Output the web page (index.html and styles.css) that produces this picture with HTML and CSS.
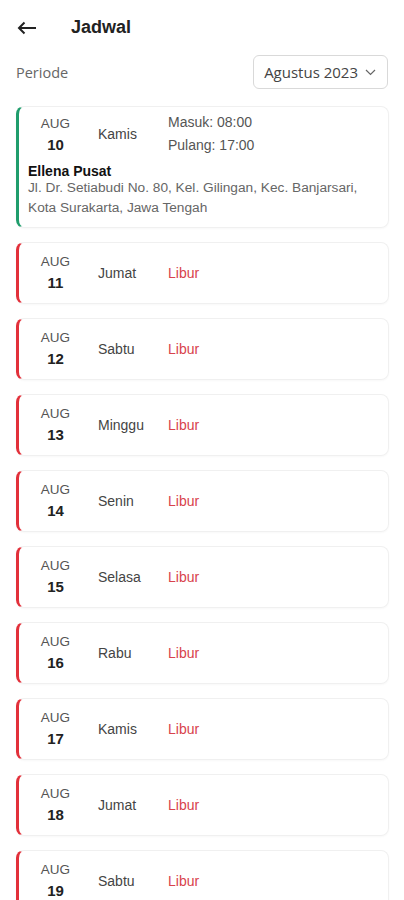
FILE: index.html
```html
<!DOCTYPE html>
<html>
<head>
	<meta http-equiv="content-type" content="text/html; charset=utf-8" />
	<title>Jadwal</title>
	<link rel="stylesheet" href="styles.css">
</head>
<body>
	<div class="header">
		<svg class="back" width="20" height="14" viewBox="0 0 20 14">
			<path d="M19 7H2M7.5 1.5L2 7l5.5 5.5" fill="none" stroke="#222" stroke-width="2" />
		</svg>
		<h1>Jadwal</h1>
	</div>

	<div class="periode">
		<span class="label">Periode</span>
		<div class="select">
			Agustus 2023
			<svg width="11" height="7" viewBox="0 0 11 7">
				<path d="M1 1l4.5 4.5L10 1" fill="none" stroke="#666" stroke-width="1.2" />
			</svg>
		</div>
	</div>

	<div class="list">
		<div class="card work">
			<div class="row">
				<div class="date"><span class="month">AUG</span><span class="day">10</span></div>
				<div class="weekday">Kamis</div>
				<div class="times">
					<div>Masuk: 08:00</div>
					<div>Pulang: 17:00</div>
				</div>
			</div>
			<div class="place">Ellena Pusat</div>
			<div class="address">Jl. Dr. Setiabudi No. 80, Kel. Gilingan, Kec. Banjarsari, Kota Surakarta, Jawa Tengah</div>
		</div>

		<div class="card off">
			<div class="row">
				<div class="date"><span class="month">AUG</span><span class="day">11</span></div>
				<div class="weekday">Jumat</div>
				<div class="status">Libur</div>
			</div>
		</div>
		<div class="card off">
			<div class="row">
				<div class="date"><span class="month">AUG</span><span class="day">12</span></div>
				<div class="weekday">Sabtu</div>
				<div class="status">Libur</div>
			</div>
		</div>
		<div class="card off">
			<div class="row">
				<div class="date"><span class="month">AUG</span><span class="day">13</span></div>
				<div class="weekday">Minggu</div>
				<div class="status">Libur</div>
			</div>
		</div>
		<div class="card off">
			<div class="row">
				<div class="date"><span class="month">AUG</span><span class="day">14</span></div>
				<div class="weekday">Senin</div>
				<div class="status">Libur</div>
			</div>
		</div>
		<div class="card off">
			<div class="row">
				<div class="date"><span class="month">AUG</span><span class="day">15</span></div>
				<div class="weekday">Selasa</div>
				<div class="status">Libur</div>
			</div>
		</div>
		<div class="card off">
			<div class="row">
				<div class="date"><span class="month">AUG</span><span class="day">16</span></div>
				<div class="weekday">Rabu</div>
				<div class="status">Libur</div>
			</div>
		</div>
		<div class="card off">
			<div class="row">
				<div class="date"><span class="month">AUG</span><span class="day">17</span></div>
				<div class="weekday">Kamis</div>
				<div class="status">Libur</div>
			</div>
		</div>
		<div class="card off">
			<div class="row">
				<div class="date"><span class="month">AUG</span><span class="day">18</span></div>
				<div class="weekday">Jumat</div>
				<div class="status">Libur</div>
			</div>
		</div>
		<div class="card off">
			<div class="row">
				<div class="date"><span class="month">AUG</span><span class="day">19</span></div>
				<div class="weekday">Sabtu</div>
				<div class="status">Libur</div>
			</div>
		</div>
	</div>
</body>
</html>
```

FILE: styles.css
```css
body {
	font-family: "Liberation Sans", Arial, sans-serif;
	background-color: #fff;
	color: #222;
	margin: 0;
	padding: 0;
}

/* Top bar */
.header {
	display: flex;
	align-items: center;
	height: 55px;
	padding: 0 0 0 17px;
	box-sizing: border-box;
}

.back {
	display: block;
}

.header h1 {
	margin: 0 0 0 34px;
	font-size: 18px;
	font-weight: bold;
	color: #222;
}

/* Period selector */
.periode {
	display: flex;
	align-items: center;
	justify-content: space-between;
	padding: 0 16px 0 16px;
	margin-bottom: 17px;
}

.periode .label {
	font-family: "Open Sans", sans-serif;
	font-size: 14.5px;
	color: #666;
}

.select {
	display: flex;
	align-items: center;
	gap: 7px;
	height: 34px;
	box-sizing: border-box;
	padding: 0 11px 0 10px;
	border: 1px solid #d9d9d9;
	border-radius: 6px;
	font-family: "Open Sans", sans-serif;
	font-size: 15px;
	color: #444;
}

.select svg {
	display: block;
	margin-top: 1px;
}

/* Schedule list */
.list {
	display: flex;
	flex-direction: column;
	gap: 14px;
	padding: 0 15px 0 16px;
}

.card {
	border: 1px solid #f0f0f0;
	border-left: 3px solid #ccc;
	border-radius: 8px;
	padding: 9px 10px 10px 9px;
	box-shadow: 0 1px 2px rgba(0, 0, 0, 0.03);
}

.card.work {
	border-left-color: #1f9d6c;
	padding-top: 4px;
	padding-bottom: 9px;
}

.card.off {
	border-left-color: #e2303a;
}

.row {
	display: flex;
	align-items: center;
}

.date {
	display: flex;
	flex-direction: column;
	align-items: center;
	width: 55px;
	flex-shrink: 0;
}

.month {
	font-size: 13.5px;
	line-height: 20px;
	color: #555;
}

.day {
	font-size: 15px;
	line-height: 21px;
	font-weight: bold;
	color: #222;
}

.weekday {
	width: 70px;
	margin-left: 15px;
	font-size: 14px;
	color: #444;
}

.times {
	font-size: 14px;
	line-height: 23px;
	color: #555;
}

.status {
	font-size: 14px;
	color: #d8424c;
}

.place {
	margin-top: 7px;
	font-size: 14px;
	line-height: 14px;
	font-weight: bold;
	color: #111;
}

.address {
	font-size: 13.7px;
	line-height: 20px;
	color: #666;
}
```
